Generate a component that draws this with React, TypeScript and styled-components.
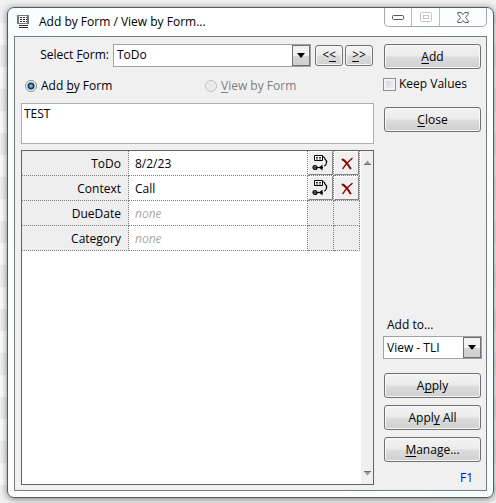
import React from 'react';
import styled, { createGlobalStyle, css } from 'styled-components';

const GlobalStyle = createGlobalStyle`
  *, *::before, *::after { box-sizing: border-box; }
  body {
    margin: 0;
    background: repeating-linear-gradient(#f1f1f1 0 22px, #fefefe 22px 44px) 0 1px;
    font: 12px/16px "Open Sans", "Noto Sans", sans-serif;
    color: #000;
  }
  button, input, select, textarea { font: inherit; color: inherit; margin: 0; }
  u { text-decoration-thickness: 1px; text-underline-offset: 2px; text-decoration-skip-ink: none; }
`;

const Desktop = styled.div`
  display: flex;
  min-height: 100vh;
  padding: 7px 2px 5px 7px;
`;

const Window = styled.main`
  flex: 1;
  display: flex;
  flex-direction: column;
  min-width: 0;
  padding: 0 6px 6px;
  border: 1px solid #555a5b;
  border-radius: 7px;
  background: linear-gradient(100deg, #f4fdfe, #fff 20%, #fff 70%, #f4fdfe);
  box-shadow: 0 1px 7px rgba(0, 0, 0, 0.5);
`;

const TitleBar = styled.header`
  display: flex;
  height: 28px;
  padding-left: 3px;
`;

const Title = styled.h1`
  flex: 1;
  margin: 0 0 0 10px;
  font-size: 12px;
  font-weight: 400;
  line-height: 28px;
`;

const TitleIcon = styled.svg`
  margin-top: 6px;
`;

const Caption = styled.div`
  display: flex;
  height: 19px;
  border: 1px solid #a3a9ab;
  border-top: 0;
  border-radius: 0 0 5px 5px;
`;

const CaptionButton = styled.button<{ $wide?: boolean }>`
  display: grid;
  place-items: center;
  width: ${(p) => (p.$wide ? 47 : 27)}px;
  padding: 0;
  border: 0;
  border-left: ${(p) => (p.$wide ? '1px solid #b9bfc1' : 0)};
  border-right: ${(p) => (p.$wide ? 0 : '1px solid #b9bfc1')};
  background: none;
  &:disabled { border-right: 0; }
`;

const Client = styled.div`
  flex: 1;
  display: grid;
  grid-template-columns: minmax(0, 1fr) 99px;
  column-gap: 9px;
  padding: 6px 4px 5px 6px;
  border: 1px solid #777b7c;
  background: #f0f0f0;
`;

const Main = styled.div`
  display: flex;
  flex-direction: column;
`;

const Side = styled.div`
  display: flex;
  flex-direction: column;
  padding-top: 1px;
`;

const SelectorRow = styled.div`
  display: flex;
  align-items: center;
  height: 24px;
`;

const SelectorLabel = styled.label`
  width: 92px;
  padding-right: 4px;
  text-align: right;
  white-space: nowrap;
`;

const Combo = styled.span<{ $grow?: boolean }>`
  display: grid;
  grid-template-columns: minmax(0, 1fr) 18px;
  height: 23px;
  border: 1px solid #a0a0a6;
  background: #fff;
  ${(p) => p.$grow && css`flex: 1;`}
`;

const ComboSelect = styled.select`
  grid-area: 1 / 1 / 2 / 3;
  appearance: none;
  width: 100%;
  padding: 0 18px 0 3px;
  border: 0;
  border-radius: 0;
  background: transparent;
  outline: 0;
`;

const ComboArrow = styled.span`
  grid-area: 1 / 2 / 2 / 3;
  display: grid;
  place-items: center;
  border: 1px solid #707070;
  background: linear-gradient(#f2f2f2 50%, #d6d6d6 50%, #cfcfcf);
  pointer-events: none;
`;

const StepButtons = styled.div`
  display: flex;
  gap: 2px;
  margin: 0 1px 0 4px;
`;

const Button = styled.button<{ $small?: boolean }>`
  ${(p) => (p.$small ? css`width: 28px; height: 21px;` : css`height: 25px; margin: 0 1px;`)}
  padding: 0;
  border: 1px solid #707070;
  border-radius: 3px;
  background: linear-gradient(#f3f3f3, #ebebeb 49%, #dddddd 51%, #cfcfcf);
  box-shadow: inset 0 0 0 1px #f8f8f8;
`;

const ModeRow = styled.div`
  display: grid;
  grid-template-columns: 180px 1fr;
  height: 36px;
  padding: 1px 0 0 4px;
  align-items: center;
`;

const ModeLabel = styled.label<{ $muted?: boolean }>`
  display: flex;
  align-items: center;
  gap: 4px;
  color: ${(p) => (p.$muted ? '#808080' : '#000')};
`;

const Radio = styled.input`
  appearance: none;
  width: 12px;
  height: 12px;
  border: 1px solid #8e8f8f;
  border-radius: 50%;
  background: radial-gradient(#e4e4e4, #f4f4f4);
  &:checked {
    background: radial-gradient(circle, #62bde0 0 1px, #1d648f 2px, #0f2a45 3px, #e6edf1 4px);
  }
  &:disabled { border-color: #bcbcbc; }
`;

const Notes = styled.textarea`
  display: block;
  width: 100%;
  height: 41px;
  padding: 2px;
  border: 1px solid #abadb3;
  border-radius: 0;
  background: #fff;
  resize: none;
  outline: 0;
`;

const FieldPanel = styled.section`
  flex: 1;
  display: flex;
  margin-top: 6px;
  border: 1px solid #646464;
  background: #fff;
`;

const FieldArea = styled.div`
  flex: 1;
`;

const FieldTable = styled.table`
  width: 100%;
  table-layout: fixed;
  border-collapse: separate;
  border-spacing: 0;
`;

const cell = css`
  height: 25px;
  border-right: 1px dotted #808080;
  border-bottom: 1px dotted #808080;
`;

const FieldName = styled.th`
  ${cell}
  width: 107px;
  padding: 2px 7px 0 0;
  background: #eee;
  font-weight: 400;
  text-align: right;
`;

const FieldValue = styled.td<{ $empty?: boolean }>`
  ${cell}
  padding: 2px 0 0 6px;
  ${(p) => p.$empty && css`color: #a9a9a9; font-style: italic;`}
`;

const FieldAction = styled.td`
  ${cell}
  width: 26px;
  padding: 0;
  background: #eee;
`;

const ToolButton = styled.button`
  display: grid;
  place-items: center;
  width: 100%;
  height: 24px;
  padding: 0;
  border: 1px solid;
  border-color: #fff #858585 #858585 #fff;
  background: #f0f0f0;
`;

const ScrollTrack = styled.div`
  display: flex;
  flex-direction: column;
  justify-content: space-between;
  align-items: center;
  width: 13px;
  padding: 9px 0 8px;
  border-left: 1px solid #fff;
  background: #f0f0f0;
`;

const Check = styled.label`
  display: flex;
  align-items: center;
  gap: 3px;
  height: 16px;
  margin: 7px 0 15px;
  white-space: nowrap;
`;

const CheckBox = styled.input`
  appearance: none;
  width: 13px;
  height: 13px;
  border: 1px solid #8e8f8f;
  background: linear-gradient(135deg, #cbcfd5, #f6f6f6);
  box-shadow: inset 0 0 0 2px #f4f4f4;
`;

const Bottom = styled.div`
  display: flex;
  flex-direction: column;
  margin-top: auto;
`;

const AddToLabel = styled.label`
  margin: 0 0 3px 4px;
`;

const Actions = styled.div`
  display: flex;
  flex-direction: column;
  gap: 7px;
  margin-top: 14px;
`;

const Help = styled.a`
  align-self: flex-end;
  margin: 9px 9px 0 0;
  color: #00f;
  line-height: 14px;
  text-decoration: none;
`;

const DownArrow = () => (
  <svg width="8" height="5" aria-hidden="true"><path d="M0 0h8L4 5z" /></svg>
);

const ScrollArrow = ({ up }: { up?: boolean }) => (
  <svg width="7" height="5" aria-hidden="true">
    <path d={up ? 'M0 4.5h7L3.5 .5z' : 'M0 .5h7L3.5 4.5z'} fill="#9b9b9b" />
    <path d={up ? 'M0 4.5h7' : 'M0 .5h7'} stroke="#707070" />
  </svg>
);

const FormIcon = () => (
  <TitleIcon width="12" height="15" viewBox="0 0 12 15" shapeRendering="crispEdges" aria-hidden="true">
    <path fill="#777" d="M0 1h12v9H0z" />
    <path fill="#fff" d="M2 2h8v7H2z" />
    <path fill="#333" d="M3 3h2v1H3zM3 5h2v1H3zM3 7h2v1H3zM6 3h2v1H6zM6 5h2v1H6zM6 7h2v1H6zM9 3h1v1H9zM9 5h1v1H9zM9 7h1v1H9zM2 11h9v1H2zM2 13h9v1H2z" />
  </TitleIcon>
);

const PickIcon = () => (
  <svg width="18" height="18" viewBox="0 0 18 18" fill="none" stroke="#000" aria-hidden="true">
    <path d="M2.5 1.5h8v5h-8z" fill="#fff" />
    <path d="M4 3.5h2M7 3.5h2M4 5h2M7 5h2" strokeWidth=".8" />
    <path d="M11 2.5c1.500.3 1.800 1.200 2 2.500 1.300 1 1.800 2.500 1.500 4-.2 1.500-1 2.600-2.300 3.300" strokeWidth="1.200" />
    <path d="M5 13.500h6" strokeWidth="1.200" />
    <path d="M10.500 10.500v6l-3.500-3z" fill="#000" stroke="none" />
    <circle cx="3" cy="13.500" r="2" fill="#777" strokeWidth="1.200" />
    <path d="M2.500 13.500h1" />
  </svg>
);

const DeleteIcon = () => (
  <svg width="12" height="13" viewBox="0 0 12 13" fill="none" stroke="#8b0000" strokeLinecap="round" aria-hidden="true">
    <path d="M1.500 2.500C4 3.500 7 7.500 9.500 11.500" strokeWidth="1.900" />
    <path d="M11 1.500C7 4.500 4 8 2 11.500" strokeWidth="1.500" />
  </svg>
);

const MinimizeIcon = () => (
  <svg width="12" height="5" aria-hidden="true"><rect x=".5" y=".5" width="11" height="4" rx="1" fill="#fff" stroke="#555967" /></svg>
);

const MaximizeIcon = () => (
  <svg width="12" height="10" fill="#fff" stroke="#c2c4c7" aria-hidden="true">
    <rect x=".5" y=".5" width="11" height="9" rx="1" />
    <rect x="3.500" y="3.500" width="5" height="3" />
  </svg>
);

const CloseIcon = () => (
  <svg width="12" height="11" viewBox="0 0 12 11" aria-hidden="true">
    <path d="M.8.500h3.400L6 2.600 7.800.500h3.400v1.700L8.500 5.500l2.700 3.300v1.700H7.800L6 8.400l-1.800 2.100H.8V8.800l2.700-3.300L.8 2.200z" fill="#fff" stroke="#555967" />
  </svg>
);

const fields = [
  { name: 'ToDo', value: '8/2/23' },
  { name: 'Context', value: 'Call' },
  { name: 'DueDate', value: '' },
  { name: 'Category', value: '' },
];

export default function App() {
  return (
    <>
      <GlobalStyle />
      <Desktop>
        <Window>
          <TitleBar>
            <FormIcon />
            <Title>Add by Form / View by Form...</Title>
            <Caption>
              <CaptionButton type="button" aria-label="Minimize"><MinimizeIcon /></CaptionButton>
              <CaptionButton type="button" aria-label="Maximize" disabled><MaximizeIcon /></CaptionButton>
              <CaptionButton type="button" aria-label="Close window" $wide><CloseIcon /></CaptionButton>
            </Caption>
          </TitleBar>
          <Client>
            <Main>
              <SelectorRow>
                <SelectorLabel htmlFor="form">Select <u>F</u>orm:</SelectorLabel>
                <Combo $grow>
                  <ComboSelect id="form"><option>ToDo</option></ComboSelect>
                  <ComboArrow><DownArrow /></ComboArrow>
                </Combo>
                <StepButtons>
                  <Button type="button" $small>&lt;<u>&lt;</u></Button>
                  <Button type="button" $small><u>&gt;</u>&gt;</Button>
                </StepButtons>
              </SelectorRow>
              <ModeRow>
                <ModeLabel>
                  <Radio type="radio" name="mode" defaultChecked />
                  <span>Add <u>b</u>y Form</span>
                </ModeLabel>
                <ModeLabel $muted>
                  <Radio type="radio" name="mode" disabled />
                  <span><u>V</u>iew by Form</span>
                </ModeLabel>
              </ModeRow>
              <Notes aria-label="Item text" defaultValue="TEST" />
              <FieldPanel>
                <FieldArea>
                  <FieldTable>
                    <tbody>
                      {fields.map(({ name, value }) => (
                        <tr key={name}>
                          <FieldName scope="row">{name}</FieldName>
                          <FieldValue $empty={!value}>{value || 'none'}</FieldValue>
                          <FieldAction>
                            {value && <ToolButton type="button" aria-label={`Pick ${name}`}><PickIcon /></ToolButton>}
                          </FieldAction>
                          <FieldAction>
                            {value && <ToolButton type="button" aria-label={`Clear ${name}`}><DeleteIcon /></ToolButton>}
                          </FieldAction>
                        </tr>
                      ))}
                    </tbody>
                  </FieldTable>
                </FieldArea>
                <ScrollTrack>
                  <ScrollArrow up />
                  <ScrollArrow />
                </ScrollTrack>
              </FieldPanel>
            </Main>
            <Side>
              <Button type="button"><u>A</u>dd</Button>
              <Check>
                <CheckBox type="checkbox" />
                Keep Values
              </Check>
              <Button type="button"><u>C</u>lose</Button>
              <Bottom>
                <AddToLabel htmlFor="target">Add to...</AddToLabel>
                <Combo>
                  <ComboSelect id="target"><option>View - TLI</option></ComboSelect>
                  <ComboArrow><DownArrow /></ComboArrow>
                </Combo>
                <Actions>
                  <Button type="button">A<u>p</u>ply</Button>
                  <Button type="button">Appl<u>y</u> All</Button>
                  <Button type="button"><u>M</u>anage...</Button>
                </Actions>
                <Help href="#help">F1</Help>
              </Bottom>
            </Side>
          </Client>
        </Window>
      </Desktop>
    </>
  );
}
